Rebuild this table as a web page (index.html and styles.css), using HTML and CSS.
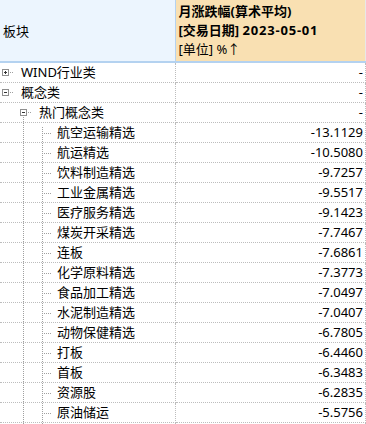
FILE: index.html
```html
<!DOCTYPE html>
<html lang="zh-CN">
<head>
<meta charset="utf-8">
<title>板块</title>
<link rel="stylesheet" href="styles.css">
</head>
<body>
<div class="grid">
  <div class="head">
    <div class="h-name">板块</div>
    <div class="h-val">
      <div class="b">月涨跌幅(算术平均)</div>
      <div class="b">[交易日期] <span class="date">2023-05-01</span></div>
      <div>[单位] %↑</div>
    </div>
  </div>

  <div class="row">
    <div class="name lv0"><span class="box plus"></span><span class="stub"></span><span class="label">WIND行业类</span></div>
    <div class="val">-</div>
  </div>
  <div class="row">
    <div class="name lv0"><span class="box"></span><span class="stub"></span><span class="label">概念类</span></div>
    <div class="val">-</div>
  </div>
  <div class="row">
    <div class="name lv1"><span class="box"></span><span class="stub"></span><span class="label">热门概念类</span></div>
    <div class="val">-</div>
  </div>
  <div class="row"><div class="name lv2 first"><span class="label">航空运输精选</span></div><div class="val">-13.1129</div></div>
  <div class="row"><div class="name lv2"><span class="label">航运精选</span></div><div class="val">-10.5080</div></div>
  <div class="row"><div class="name lv2"><span class="label">饮料制造精选</span></div><div class="val">-9.7257</div></div>
  <div class="row"><div class="name lv2"><span class="label">工业金属精选</span></div><div class="val">-9.5517</div></div>
  <div class="row"><div class="name lv2"><span class="label">医疗服务精选</span></div><div class="val">-9.1423</div></div>
  <div class="row"><div class="name lv2"><span class="label">煤炭开采精选</span></div><div class="val">-7.7467</div></div>
  <div class="row"><div class="name lv2"><span class="label">连板</span></div><div class="val">-7.6861</div></div>
  <div class="row"><div class="name lv2"><span class="label">化学原料精选</span></div><div class="val">-7.3773</div></div>
  <div class="row"><div class="name lv2"><span class="label">食品加工精选</span></div><div class="val">-7.0497</div></div>
  <div class="row"><div class="name lv2"><span class="label">水泥制造精选</span></div><div class="val">-7.0407</div></div>
  <div class="row"><div class="name lv2"><span class="label">动物保健精选</span></div><div class="val">-6.7805</div></div>
  <div class="row"><div class="name lv2"><span class="label">打板</span></div><div class="val">-6.4460</div></div>
  <div class="row"><div class="name lv2"><span class="label">首板</span></div><div class="val">-6.3483</div></div>
  <div class="row"><div class="name lv2"><span class="label">资源股</span></div><div class="val">-6.2835</div></div>
  <div class="row"><div class="name lv2"><span class="label">原油储运</span></div><div class="val">-5.5756</div></div>
  <div class="row"><div class="name lv2 empty"></div><div class="val"></div></div>
</div>
</body>
</html>
```

FILE: styles.css
```css
html, body {
  margin: 0;
  padding: 0;
  overflow: hidden;
  background: #ffffff;
}

.grid {
  width: 366px;
  font-family: "Noto Sans", "Noto Sans CJK SC", sans-serif;
  font-size: 13px;
  color: #000;
}

.head {
  display: flex;
  height: 61px;
  border-bottom: 2px solid #b4d2f0;
}

.h-name {
  width: 172px;
  padding-left: 3px;
  background: #ecf5fe;
  display: flex;
  align-items: center;
  border-right: 1px solid #b4d2f0;
}

.h-val {
  width: 187px;
  padding: 2px 0 0 3px;
  background: #f9e0b2;
  line-height: 19px;
  border-right: 1px solid #e8e8e8;
  white-space: nowrap;
}

.h-val .b {
  font-weight: bold;
}

.date {
  letter-spacing: 0.8px;
}

.row {
  display: flex;
  height: 20px;
}

.name {
  width: 175px;
  height: 19px;
  border-bottom: 1px dotted #bdbdbd;
  border-right: 1px dotted #bdbdbd;
  display: flex;
  align-items: center;
  line-height: 19px;
  white-space: nowrap;
  background-repeat: no-repeat;
}

.val {
  width: 187px;
  height: 19px;
  padding-right: 2px;
  border-bottom: 1px dotted #bdbdbd;
  border-right: 1px dotted #bdbdbd;
  text-align: right;
  line-height: 19px;
  white-space: nowrap;
}

.box {
  width: 5px;
  height: 5px;
  border: 1px solid #8f8f8f;
  background:
    linear-gradient(#333, #333) center / 3px 1px no-repeat,
    #fff;
  flex: none;
}

.box.plus {
  background:
    linear-gradient(#333, #333) center / 3px 1px no-repeat,
    linear-gradient(#333, #333) center / 1px 3px no-repeat,
    #fff;
}

.stub {
  width: 4px;
  height: 1px;
  margin-left: 1px;
  background: repeating-linear-gradient(to right, #a0a0a0 0 1px, transparent 1px 2px);
  flex: none;
}

.lv0 { padding-left: 2px; width: 173px; }
.lv0 .label { margin-left: 7px; }

.lv1 {
  padding-left: 20px;
  width: 155px;
  background-image: repeating-linear-gradient(to bottom, #a0a0a0 0 1px, transparent 1px 2px);
  background-size: 1px 6px;
  background-position: 23px 14px;
}
.lv1 .label { margin-left: 7px; }

.lv2 {
  padding-left: 57px;
  width: 118px;
  background-image:
    repeating-linear-gradient(to bottom, #a0a0a0 0 1px, transparent 1px 2px),
    repeating-linear-gradient(to bottom, #a0a0a0 0 1px, transparent 1px 2px),
    repeating-linear-gradient(to right, #a0a0a0 0 1px, transparent 1px 2px);
  background-size: 1px 20px, 1px 20px, 7px 1px;
  background-position: 23px 0, 42px 0, 44px 10px;
}

.lv2.first {
  background-size: 1px 20px, 1px 16px, 7px 1px;
  background-position: 23px 0, 42px 4px, 44px 10px;
}
```
